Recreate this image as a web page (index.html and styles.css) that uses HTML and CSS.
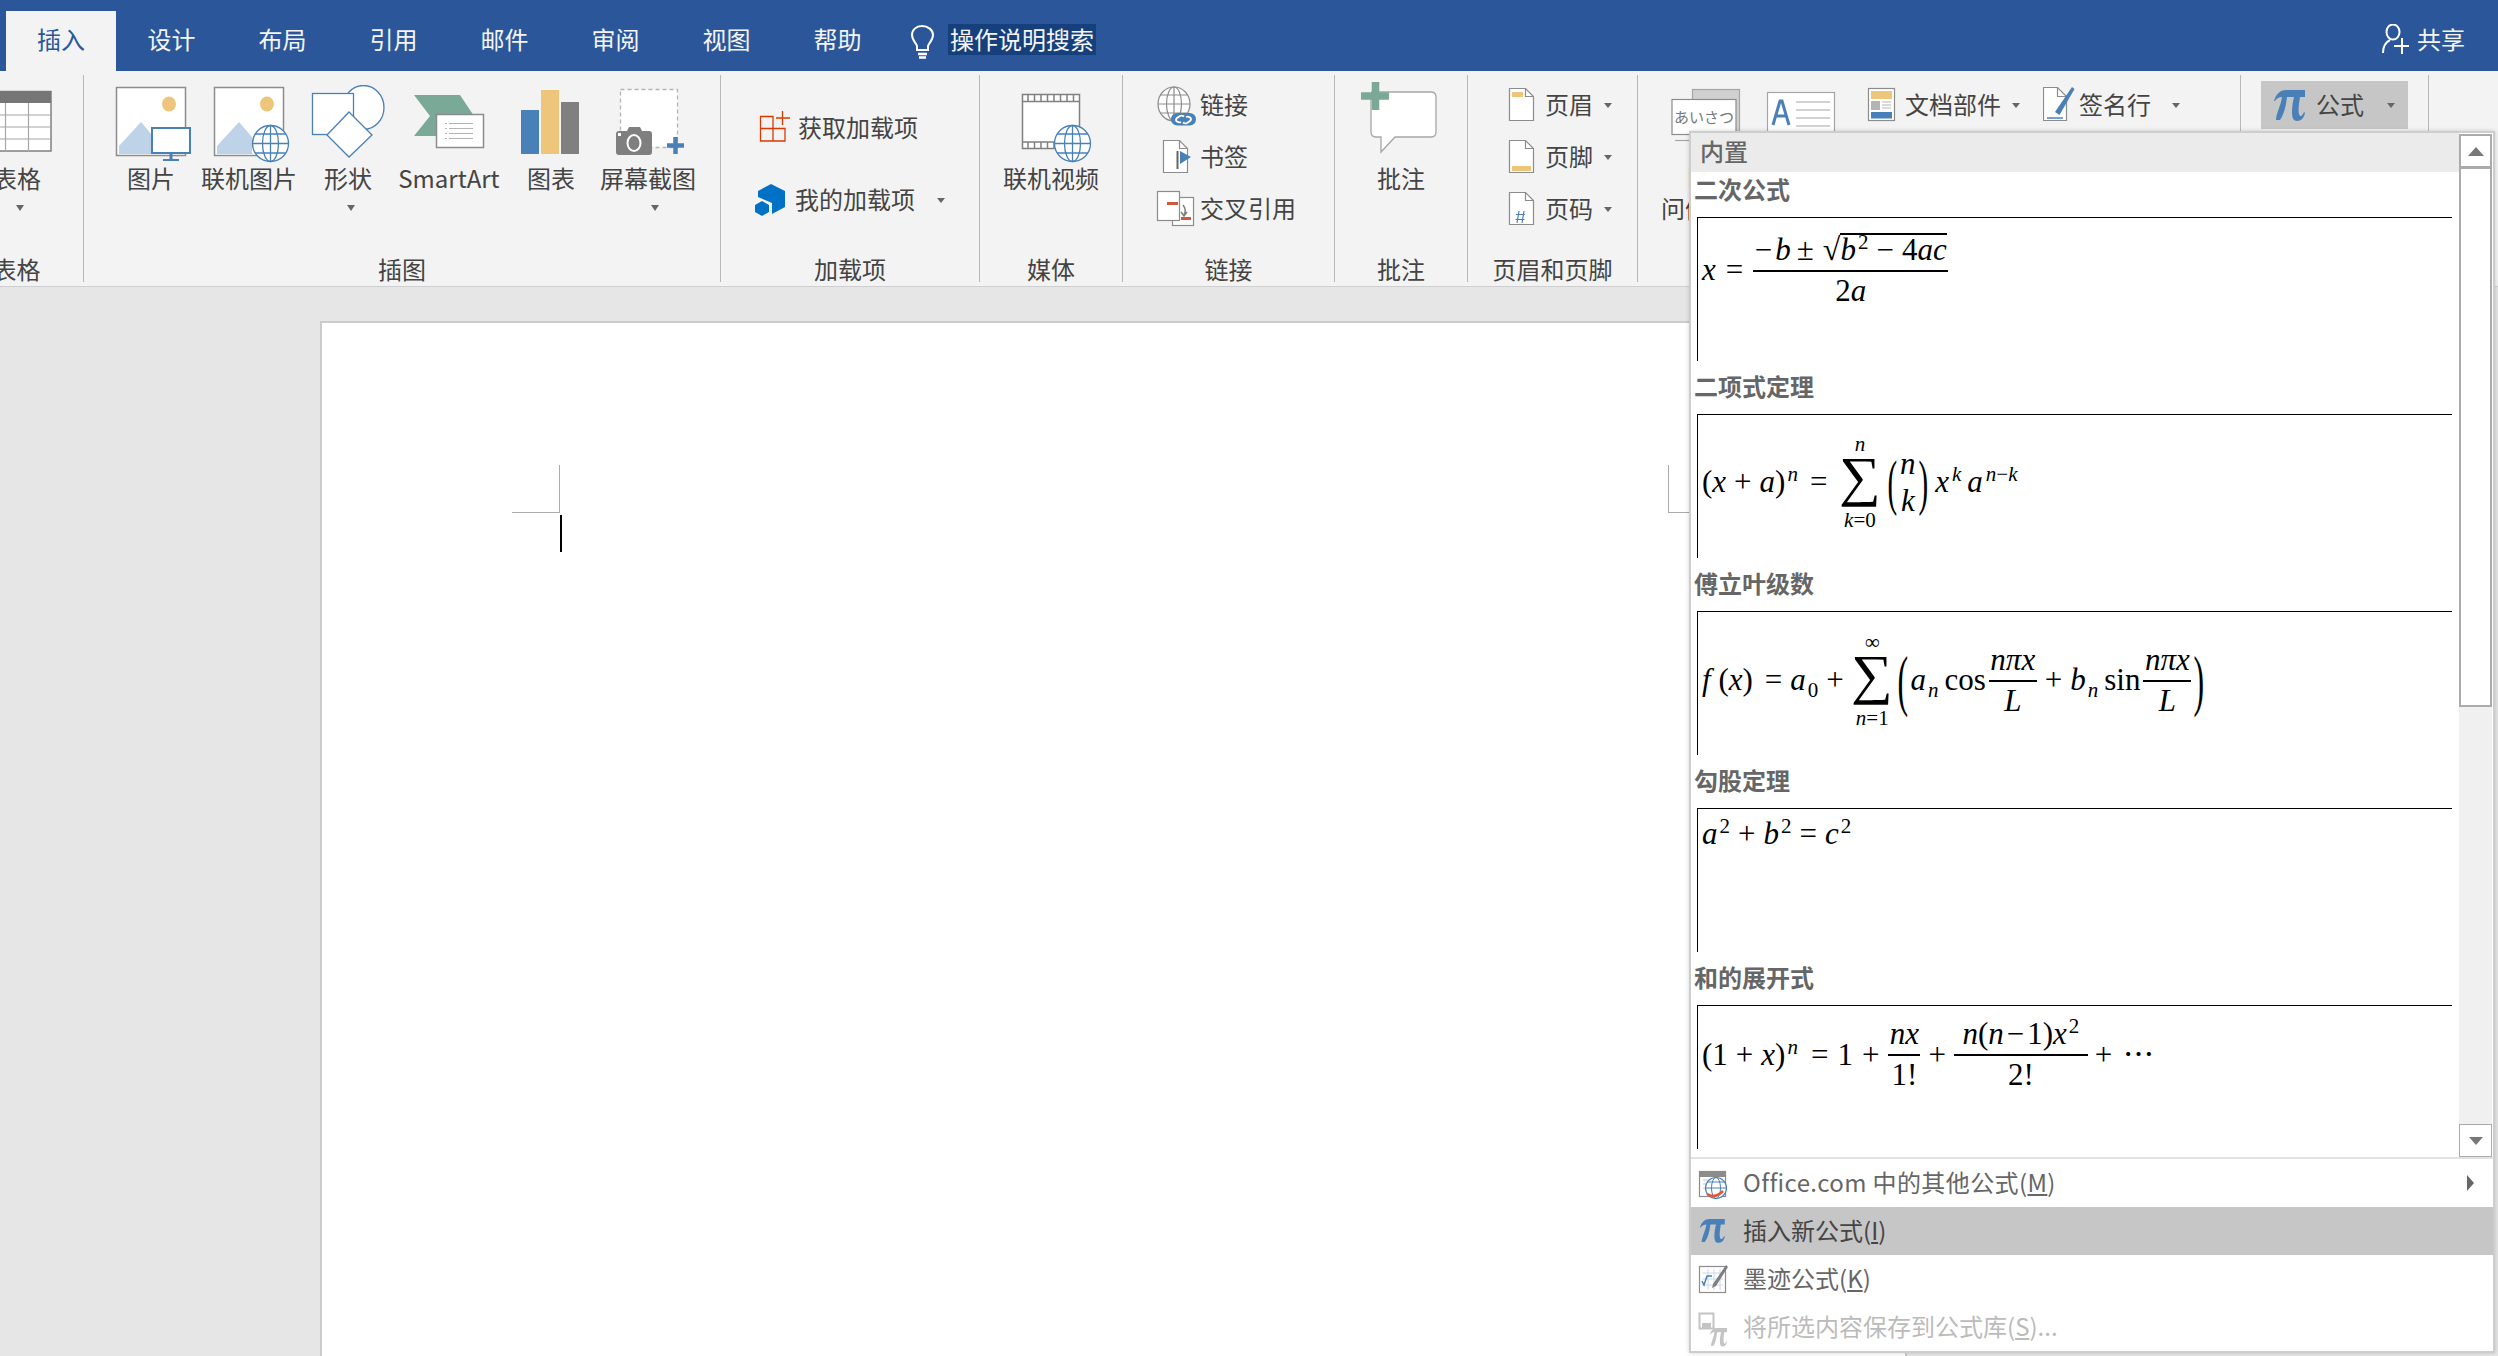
FILE: index.html
```html
<!DOCTYPE html>
<html lang="zh-CN">
<head>
<meta charset="utf-8">
<title>插入 - Word</title>
<link rel="stylesheet" href="styles.css">
</head>
<body>
<div class="app">
  <header class="titlebar">
    <nav class="tabs">
      <span class="tab active">插入</span><span class="tab">设计</span><span class="tab">布局</span><span class="tab">引用</span><span class="tab">邮件</span><span class="tab">审阅</span><span class="tab">视图</span><span class="tab">帮助</span>
    </nav>
    <svg class="bulb" width="23" height="34" viewBox="911 25 23 34"><path d="M917 46c-1-3-5-6-5-11 0-5 4-9 10-9s11 4 11 9c0 5-4 8-5 11v4h-11z" fill="none" stroke="#fff" stroke-width="2"/><path d="M918 54h9M919 57.500h7" stroke="#fff" stroke-width="2.500"/></svg>
    <span class="search">操作说明搜索</span>
    <div class="share">
      <svg width="28" height="30" viewBox="2382 24 28 30"><ellipse cx="2393" cy="32" rx="6.500" ry="7.500" fill="none" stroke="#fff" stroke-width="2"/><path d="M2383 53c0-7 3-11 7-13" fill="none" stroke="#fff" stroke-width="2"/><path d="M2402 38v16M2394 46h15" stroke="#fff" stroke-width="2"/></svg>
      <span>共享</span>
    </div>
  </header>

  <section class="ribbon">
    <div class="group g0">
      <div class="gbody">
        <div class="big w100">
          <svg width="100" height="76" viewBox="-33 85 100 76"><rect x="-20" y="91.500" width="71" height="59.500" fill="#fff" stroke="#808080" stroke-width="1.500"/><rect x="-20" y="91" width="71" height="12" fill="#767676"/><path d="M-20 115h71M-20 127h71M-20 139h71M5.500 103v48M28.500 103v48" stroke="#a6a6a6" stroke-width="1.200"/></svg>
          <span class="blabel">表格</span><i class="caret caret-t"></i>
        </div>
      </div>
      <div class="glabel">表格</div>
    </div>

    <div class="group g1">
      <div class="gbody">
        <div class="big w98">
          <svg width="98" height="76" viewBox="102 85 98 76"><rect x="116.500" y="87.500" width="69" height="68" fill="#fff" stroke="#8c8c8c" stroke-width="1.500"/><ellipse cx="169" cy="104" rx="7" ry="7.500" fill="#edc67b"/><path d="M119 154v-8l22-24 11 13v19z" fill="#bed2e8"/><rect x="152" y="128" width="38" height="25" fill="#fff" stroke="#4a80b8" stroke-width="2"/><path d="M171 153v6M163 160.500h16" stroke="#4a80b8" stroke-width="3"/></svg>
          <span class="blabel">图片</span>
        </div>
        <div class="big w98">
          <svg width="98" height="80" viewBox="200 85 98 80"><rect x="214.500" y="87.500" width="69" height="68" fill="#fff" stroke="#8c8c8c" stroke-width="1.500"/><ellipse cx="267" cy="104" rx="7" ry="7.500" fill="#edc67b"/><path d="M217 154v-8l22-24 13 15v17z" fill="#bed2e8"/><ellipse cx="270.500" cy="143.500" rx="18" ry="18" fill="#fff" stroke="#4a80b8" stroke-width="1.300"/><ellipse cx="270.500" cy="143.500" rx="8" ry="18" fill="none" stroke="#4a80b8" stroke-width="1.300"/><path d="M252.500 143.500h36M270.500 125.500v36M255 134h31M255 153h31" stroke="#4a80b8" stroke-width="1.300"/></svg>
          <span class="blabel shift-up">联机图片</span>
        </div>
        <div class="big w100">
          <svg width="100" height="76" viewBox="298 85 100 76"><ellipse cx="363.500" cy="107.500" rx="20.500" ry="22" fill="#fff" stroke="#4a80b8" stroke-width="1.300"/><rect x="312.500" y="93.500" width="41" height="41" fill="#fff" stroke="#4a80b8" stroke-width="1.300"/><path d="M349 112l23 23-23 22-22-22z" fill="#fff" stroke="#4a80b8" stroke-width="1.300"/></svg>
          <span class="blabel">形状</span><i class="caret caret-s"></i>
        </div>
        <div class="big w102">
          <svg width="102" height="76" viewBox="398 85 102 76"><path d="M414 95h46l16 24-30 17h-32l16-20z" fill="#7aa997"/><rect x="436.500" y="114.500" width="47" height="33" fill="#fff" stroke="#8c8c8c" stroke-width="1.500"/><path d="M445 123.500h2M449 123.500h24M445 128.500h2M449 128.500h24M445 133.500h2M449 133.500h24M445 138.500h2M449 138.500h24" stroke="#b4b4b4" stroke-width="1.200"/></svg>
          <span class="blabel">SmartArt</span>
        </div>
        <div class="big w102">
          <svg width="102" height="76" viewBox="500 85 102 76"><rect x="521" y="110" width="18" height="44" fill="#4a80b8"/><rect x="541" y="90" width="18" height="64" fill="#edc67b"/><rect x="561" y="102" width="18" height="52" fill="#808080"/></svg>
          <span class="blabel">图表</span>
        </div>
        <div class="big w92">
          <svg width="92" height="76" viewBox="602 85 92 76"><rect x="620.500" y="89.500" width="57" height="58" fill="#fff" stroke="#b4b4b4" stroke-width="1.300" stroke-dasharray="4 3"/><path d="M616 134q0-3 3-3h8l2-4h11l2 4h7q3 0 3 3v18q0 3-3 3h-30q-3 0-3-3z" fill="#7f7f7f"/><ellipse cx="634" cy="143" rx="6.500" ry="8" fill="none" stroke="#fff" stroke-width="2"/><rect x="618" y="133" width="3" height="3" fill="#fff"/><path d="M667 145.500h17M675.500 137v17" stroke="#4a80b8" stroke-width="4.500"/></svg>
          <span class="blabel">屏幕截图</span><i class="caret caret-r"></i>
        </div>
      </div>
      <div class="glabel">插图</div>
    </div>

    <div class="group g2">
      <div class="gbody col col-addin">
        <div class="row addin">
          <svg width="44" height="48" viewBox="754 104 44 48"><path d="M760.500 116.500h12.500v12h12v12.500h-24.500zM760.500 128.500h12.500M773 141v-12" fill="none" stroke="#d83b01" stroke-width="1.300"/><path d="M776 118h14M782.500 111v14" stroke="#d83b01" stroke-width="1.300"/></svg>
          <span>获取加载项</span>
        </div>
        <div class="row addin">
          <svg width="41" height="48" viewBox="754 176 41 48"><path d="M758 191l13-7 14 7v16l-13 7v-11l-14-6z" fill="#0072c6"/><path d="M755 205l7-4 7 4v7l-7 4-7-4z" fill="#0072c6"/></svg>
          <span>我的加载项</span><i class="caret caret-inline addin-caret"></i>
        </div>
      </div>
      <div class="glabel">加载项</div>
    </div>

    <div class="group g3">
      <div class="gbody">
        <div class="big w100">
          <svg width="100" height="80" viewBox="1001 85 100 80"><rect x="1022.500" y="94.500" width="57" height="54" fill="#fff" stroke="#808080" stroke-width="1.500"/><path d="M1023 101.500h56M1023 142h56" stroke="#808080" stroke-width="1.500"/><path d="M1028 95v6M1034.500 95v6M1041 95v6M1047.500 95v6M1054 95v6M1060.500 95v6M1067 95v6M1073.500 95v6M1028 142v6M1034.500 142v6M1041 142v6M1047.500 142v6M1054 142v6" stroke="#808080" stroke-width="1.500"/><ellipse cx="1072.500" cy="143.500" rx="18" ry="18" fill="#fff" stroke="#4a80b8" stroke-width="1.300"/><ellipse cx="1072.500" cy="143.500" rx="8" ry="18" fill="none" stroke="#4a80b8" stroke-width="1.300"/><path d="M1054.500 143.500h36M1072.500 125.500v36M1057 134h31M1057 153h31" stroke="#4a80b8" stroke-width="1.300"/></svg>
          <span class="blabel shift-up">联机视频</span>
        </div>
      </div>
      <div class="glabel">媒体</div>
    </div>

    <div class="group g4">
      <div class="gbody col">
        <div class="row">
          <svg width="44" height="52" viewBox="1156 79 44 52"><ellipse cx="1174" cy="104" rx="16" ry="17" fill="#fff" stroke="#8c8c8c" stroke-width="1.200"/><ellipse cx="1174" cy="104" rx="7.500" ry="17" fill="none" stroke="#8c8c8c" stroke-width="1.200"/><path d="M1158 104h32M1174 87v34M1160.500 95h27M1160.500 113h27" stroke="#8c8c8c" stroke-width="1.200"/><rect x="1171" y="113" width="25" height="12.500" rx="6.200" fill="#4a80b8"/><path d="M1184 116.500q-2-1.500-4-.5l-3 2q-2 2 0 3.500t4 .5M1183 122.500q2 1.500 4 .5l3-2q2-2 0-3.500t-4-.5" fill="none" stroke="#fff" stroke-width="1.800"/></svg>
          <span>链接</span>
        </div>
        <div class="row">
          <svg width="44" height="52" viewBox="1156 131 44 52"><path d="M1163.500 140.500h16l8 8v24h-24z" fill="#fff" stroke="#8c8c8c" stroke-width="1.200"/><path d="M1179.500 140.500v8h8" fill="none" stroke="#8c8c8c" stroke-width="1.200"/><rect x="1176.500" y="151" width="2" height="18" fill="#666"/><path d="M1180 151l11 6-11 7z" fill="#4a80b8"/></svg>
          <span>书签</span>
        </div>
        <div class="row">
          <svg width="44" height="52" viewBox="1156 183 44 52"><rect x="1172.500" y="197.500" width="21" height="28" fill="#fff" stroke="#8c8c8c" stroke-width="1.200"/><rect x="1157.500" y="191.500" width="22" height="29" fill="#fff" stroke="#8c8c8c" stroke-width="1.200"/><rect x="1167" y="202" width="11" height="3" fill="#d2583d"/><rect x="1181" y="217" width="10" height="3" fill="#d2583d"/><path d="M1183 205q4 5 1 10M1181 212l3 4 3-4" fill="none" stroke="#808080" stroke-width="1.500"/></svg>
          <span>交叉引用</span>
        </div>
      </div>
      <div class="glabel">链接</div>
    </div>

    <div class="group g5">
      <div class="gbody">
        <div class="big w100">
          <svg width="100" height="80" viewBox="1351 81 100 80" class="comment-icon"><path d="M1371 92h60q5 0 5 5v35q0 5-5 5h-36l-14 15v-15h-5q-5 0-5-5v-35q0-5 5-5z" fill="#fff" stroke="#a6a6a6" stroke-width="1.300"/><path d="M1361 96h28M1375.500 82v28" stroke="#7aa997" stroke-width="7.500"/></svg>
          <span class="blabel">批注</span>
        </div>
      </div>
      <div class="glabel">批注</div>
    </div>

    <div class="group g6">
      <div class="gbody col">
        <div class="row">
          <svg width="37" height="52" viewBox="1508 79 37 52"><path d="M1509.500 88.500h16l8 8v24h-24z" fill="#fff" stroke="#8c8c8c" stroke-width="1.200"/><path d="M1525.500 88.500v8h8" fill="none" stroke="#8c8c8c" stroke-width="1.200"/><rect x="1512" y="92" width="11" height="5" fill="#edc67b"/></svg>
          <span>页眉</span><i class="caret caret-inline"></i>
        </div>
        <div class="row">
          <svg width="37" height="52" viewBox="1508 131 37 52"><path d="M1509.500 140.500h16l8 8v24h-24z" fill="#fff" stroke="#8c8c8c" stroke-width="1.200"/><path d="M1525.500 140.500v8h8" fill="none" stroke="#8c8c8c" stroke-width="1.200"/><rect x="1512" y="166" width="19" height="5" fill="#edc67b"/></svg>
          <span>页脚</span><i class="caret caret-inline"></i>
        </div>
        <div class="row">
          <svg width="37" height="52" viewBox="1508 183 37 52"><path d="M1509.500 192.500h16l8 8v24h-24z" fill="#fff" stroke="#8c8c8c" stroke-width="1.200"/><path d="M1525.500 192.500v8h8" fill="none" stroke="#8c8c8c" stroke-width="1.200"/><path d="M1519 211l-2 12M1524 211l-2 12M1516 214.500h9M1515.500 219.500h9" stroke="#4a80b8" stroke-width="1.200"/></svg>
          <span>页码</span><i class="caret caret-inline"></i>
        </div>
      </div>
      <div class="glabel">页眉和页脚</div>
    </div>

    <div class="group g7">
      <div class="gbody g7body">
        <div class="big w100 greet">
          <svg width="100" height="60" viewBox="1647 81 100 60"><rect x="1692.500" y="87.500" width="47" height="42" fill="#d0d0d0" stroke="#a6a6a6" stroke-width="1.200"/><rect x="1672" y="97.500" width="64" height="35" fill="#fff" stroke="#8c8c8c" stroke-width="1.200"/><text x="1674" y="121" class="greet-text">あいさつ</text><path d="M1675 138.500h16" stroke="#a6a6a6" stroke-width="1.200"/></svg>
          <span class="blabel greet-a">日</span>
          <span class="blabel greet-b">问候语</span>
        </div>
        <svg class="textbox" width="70" height="52" viewBox="1766 81 70 52"><rect x="1767.500" y="92.500" width="67" height="50" fill="#fff" stroke="#a6a6a6" stroke-width="1.200"/><path d="M1773 125l7-24h2l7 24M1775.500 116h11" fill="none" stroke="#4a80b8" stroke-width="3"/><path d="M1796 102h34M1796 110h34M1796 118h34M1796 126h34" stroke="#c4c4c4" stroke-width="1.300"/></svg>
        <div class="row part">
          <svg width="41" height="52" viewBox="1864 79 41 52"><rect x="1868.500" y="88.500" width="26" height="32" fill="#fff" stroke="#8c8c8c" stroke-width="1.200"/><rect x="1871" y="91" width="21" height="8" fill="#edc67b"/><rect x="1871" y="101" width="9" height="9" fill="#b4b4b4"/><path d="M1882 102h9M1882 105h9M1882 108h9" stroke="#b4b4b4"/><rect x="1871" y="112" width="21" height="6.500" fill="#4a80b8"/></svg>
          <span>文档部件</span><i class="caret caret-inline"></i>
        </div>
        <div class="row part sign">
          <svg width="36" height="52" viewBox="2044 79 36 52"><path d="M2044.500 87.500h14l9 9v24h-23z" fill="#fff" stroke="#8c8c8c" stroke-width="1.200"/><path d="M2058.500 87.500v9h9" fill="none" stroke="#8c8c8c" stroke-width="1.200"/><path d="M2056 112l17-25 2.500 2-15 26z" fill="#4a80b8"/><path d="M2048 118h16" stroke="#4a80b8" stroke-width="1.500"/></svg>
          <span>签名行</span><i class="caret caret-inline sign-caret"></i>
        </div>
      </div>
      <div class="glabel"></div>
    </div>

    <div class="group g8">
      <div class="gbody">
        <div class="eqbtn">
          <svg width="55" height="48" viewBox="2261 81 55 48"><path class="pi" d="M2274 101C2276 94 2280 90 2286 90H2305V97H2300C2299 104 2298 110 2299 114 2300 117 2302 117 2304 112L2305 113C2304 118 2301 121 2297 121 2293 121 2292 117 2292 112 2292 106 2293 101 2294 97H2287C2286 106 2284 114 2280 120H2276C2276 114 2281 105 2282 97 2279 97 2277 98 2275 101Z"/></svg>
          <span>公式</span><i class="caret caret-inline eq-caret"></i>
        </div>
      </div>
      <div class="glabel"></div>
    </div>
  </section>

  <main class="workspace">
    <div class="page">
      <i class="crop crop-l"></i>
      <i class="crop crop-r"></i>
      <i class="cursor"></i>
    </div>
  </main>

  <aside class="popup">
    <div class="gallery">
      <div class="gcontent">
        <div class="ghead">内置</div>

        <h3 class="sec">二次公式</h3>
        <div class="eqbox">
          <div class="eq eq1">
            <i>x</i><span class="op">=</span>
            <span class="frac f-quad"><span class="num"><span class="un">−</span><i>b</i><span class="op pm">±</span><span class="rt">√</span><span class="rad"><i>b</i><sup>2</sup><span class="op">−</span>4<i>ac</i></span></span><span class="den">2<i>a</i></span></span>
          </div>
        </div>

        <h3 class="sec">二项式定理</h3>
        <div class="eqbox">
          <div class="eq eq2">
            <span class="lead">(<i>x</i><span class="op">+</span><i>a</i>)<sup><i>n</i></sup></span><span class="op">=</span>
            <span class="sum"><small><i>n</i></small><b>∑</b><small><i>k</i>=0</small></span>
            <span class="pl">(</span><span class="binom"><i>n</i><i>k</i></span><span class="pl">)</span>
            <span class="tail"><i>x</i><sup><i>k</i></sup><i class="a">a</i><sup><i>n</i>−<i>k</i></sup></span>
          </div>
        </div>

        <h3 class="sec">傅立叶级数</h3>
        <div class="eqbox">
          <div class="eq eq3">
            <span class="lead"><i>f</i> (<i>x</i>)</span><span class="op">=</span><span><i>a</i><sub>0</sub></span><span class="op">+</span>
            <span class="sum"><small>∞</small><b>∑</b><small><i>n</i>=1</small></span>
            <span class="pl pl-big">(</span><span><i>a</i><sub><i>n</i></sub></span><span class="fn">cos</span>
            <span class="frac f-small"><span class="num"><i>nπx</i></span><span class="den"><i>L</i></span></span>
            <span class="op">+</span><span><i>b</i><sub><i>n</i></sub></span><span class="fn">sin</span>
            <span class="frac f-small"><span class="num"><i>nπx</i></span><span class="den"><i>L</i></span></span>
            <span class="pl pl-big">)</span>
          </div>
        </div>

        <h3 class="sec">勾股定理</h3>
        <div class="eqbox">
          <div class="eq eq4">
            <span><i>a</i><sup>2</sup></span><span class="op">+</span><span><i>b</i><sup>2</sup></span><span class="op">=</span><span><i>c</i><sup>2</sup></span>
          </div>
        </div>

        <h3 class="sec">和的展开式</h3>
        <div class="eqbox">
          <div class="eq eq5">
            <span class="lead">(1<span class="op">+</span><i>x</i>)<sup><i>n</i></sup></span><span class="op">=</span><span>1</span><span class="op">+</span>
            <span class="frac f-nx"><span class="num"><i>nx</i></span><span class="den">1!</span></span>
            <span class="op op-t">+</span>
            <span class="frac f-n2"><span class="num"><i>n</i>(<i>n</i><span class="op">−</span>1)<i>x</i><sup>2</sup></span><span class="den">2!</span></span>
            <span class="op op-last">+</span><span>⋯</span>
          </div>
        </div>
      </div>
      <div class="scroll">
        <div class="sbtn"><i class="tri-up"></i></div>
        <div class="thumb"></div>
        <div class="track"></div>
        <div class="sbtn sbtn-down"><i class="tri-down"></i></div>
      </div>
    </div>

    <div class="menu">
      <div class="mitem">
        <svg width="52" height="48" viewBox="1691 0 52 48"><rect x="1699.500" y="12.500" width="26" height="25" fill="#fff" stroke="#8c8c8c" stroke-width="1.200"/><rect x="1700" y="13" width="25" height="5" fill="#8c8c8c"/><path d="M1703 21h8M1703 25h8M1703 29h8" stroke="#c4c4c4"/><circle cx="1716" cy="29" r="10.500" fill="#fff" stroke="#4a80b8" stroke-width="1.200"/><ellipse cx="1716" cy="29" rx="4.500" ry="10.500" fill="none" stroke="#4a80b8"/><path d="M1705.500 29h21M1707 23h18" stroke="#4a80b8"/><path d="M1707 35q8 5 16-3" fill="none" stroke="#e8562a" stroke-width="2.500"/></svg>
        <span class="wide">Office.com 中的其他公式(<u>M</u>)</span>
        <i class="tri-right"></i>
      </div>
      <div class="mitem hl">
        <svg width="52" height="48" viewBox="1691 0 52 48"><path class="pi" transform="translate(1700 12) scale(.8 .77) translate(-2274 -90)" d="M2274 101C2276 94 2280 90 2286 90H2305V97H2300C2299 104 2298 110 2299 114 2300 117 2302 117 2304 112L2305 113C2304 118 2301 121 2297 121 2293 121 2292 117 2292 112 2292 106 2293 101 2294 97H2287C2286 106 2284 114 2280 120H2276C2276 114 2281 105 2282 97 2279 97 2277 98 2275 101Z"/></svg>
        <span>插入新公式(<u>I</u>)</span>
      </div>
      <div class="mitem">
        <svg width="52" height="48" viewBox="1691 0 52 48"><rect x="1699.500" y="11.500" width="26" height="26" fill="#fff" stroke="#8c8c8c" stroke-width="1.200"/><path d="M1702 18h21M1702 24h21M1702 30h21M1708 14v21M1714 14v21M1720 14v21" stroke="#c9d8ea"/><path d="M1702 26l2 4 3-9h5" fill="none" stroke="#4a80b8" stroke-width="1.500"/><path d="M1713 29l13-19 2 2-12 19-4 2z" fill="#7f7f7f"/></svg>
        <span>墨迹公式(<u>K</u>)</span>
      </div>
      <div class="mitem off">
        <svg width="52" height="48" viewBox="1691 0 52 48"><rect x="1699.500" y="10.500" width="14" height="15" fill="#fff" stroke="#c4c4c4" stroke-width="2"/><rect x="1702" y="20" width="9" height="5" fill="#c4c4c4"/><path class="pi-off" transform="translate(1710 25) scale(.55 .6) translate(-2274 -90)" d="M2274 101C2276 94 2280 90 2286 90H2305V97H2300C2299 104 2298 110 2299 114 2300 117 2302 117 2304 112L2305 113C2304 118 2301 121 2297 121 2293 121 2292 117 2292 112 2292 106 2293 101 2294 97H2287C2286 106 2284 114 2280 120H2276C2276 114 2281 105 2282 97 2279 97 2277 98 2275 101Z"/></svg>
        <span>将所选内容保存到公式库(<u>S</u>)...</span>
      </div>
    </div>
  </aside>
</div>
</body>
</html>
```
FILE: styles.css
```css
* { box-sizing: border-box; }
html, body { margin: 0; height: 100%; overflow: hidden; }
body { font-family: "Noto Sans CJK SC", "Liberation Sans", sans-serif; font-size: 24px; color: #444; background: #e6e6e6; }
svg { display: block; flex: none; }
.app { position: relative; width: 2498px; height: 1356px; display: flex; flex-direction: column; overflow: hidden; }

/* title bar */
.titlebar { height: 71px; flex: none; background: #2b579a; color: #f4f4f4; display: flex; align-items: flex-end; padding-left: 5px; position: relative; }
.tabs { display: flex; height: 60px; }
.tab { width: 111px; height: 60px; line-height: 56px; text-align: center; }
.tab.active { background: #f3f3f3; color: #2b579a; margin-left: 1px; width: 110px; }
.bulb { margin: 0 14px 12px 18px; }
.search { background: #16407c; height: 31px; line-height: 29px; padding: 0 2px; margin-bottom: 16px; }
.share { margin-left: auto; display: flex; align-items: center; gap: 7px; padding-right: 33px; height: 30px; margin-bottom: 17px; }
.share span { margin-bottom: 2px; }

/* ribbon */
.ribbon { height: 216px; flex: none; background: #f3f3f3; border-bottom: 1px solid #cfcfcf; display: flex; padding-top: 4px; }
.group { height: 207px; border-right: 1px solid #b8b8b8; display: flex; flex-direction: column; flex: none; }
.gbody { flex: 1; display: flex; min-height: 0; }
.glabel { height: 24px; line-height: 21px; text-align: center; white-space: nowrap; }
.g0 { width: 134px; margin-left: -50px; }
.g0 .gbody { padding-left: 17px; }
.g1 { width: 637px; }
.g1 .gbody { padding-left: 18px; }
.g2 { width: 259px; }
.g2 .gbody { padding-left: 33px; }
.g3 { width: 143px; }
.g3 .gbody { padding-left: 21px; }
.g4 { width: 212px; }
.g4 .gbody { padding-left: 33px; }
.g5 { width: 133px; }
.g5 .gbody { padding-left: 16px; }
.g6 { width: 170px; }
.g6 .gbody { padding-left: 40px; }
.g7 { width: 603px; }
.g7 .gbody { padding-left: 9px; }
.g8 { width: 188px; }
.g8 .gbody { padding-left: 20px; }

.big { display: flex; flex-direction: column; align-items: center; padding-top: 10px; flex: none; position: relative; }
.comment-icon { margin-top: -4px; }
.w92 { width: 92px; }
.w98 { width: 98px; }
.w100 { width: 100px; }
.w102 { width: 102px; }
.blabel { height: 34px; line-height: 34px; white-space: nowrap; }
.shift-up { margin-top: -4px; }
.caret { display: block; width: 0; height: 0; border-left: 4.500px solid transparent; border-right: 4.500px solid transparent; border-top: 6px solid #666; margin-top: 10px; flex: none; }
.caret-t { margin-left: 6px; }
.caret-s { margin-left: 6px; }
.caret-r { margin-left: 13px; }
.caret-inline { margin-top: 0; margin-left: 11px; border-left-width: 4px; border-right-width: 4px; border-top-width: 5px; }
.addin-caret { margin-left: 22px; }
.sign-caret { margin-left: 21px; }
.eq-caret { margin-left: 23px; }
.col { flex-direction: column; padding-top: 4px; }
.row { display: flex; align-items: center; height: 52px; white-space: nowrap; flex: none; }
.row > span, .eqbtn > span { margin-bottom: 3px; }
.col-addin { padding-top: 29px; gap: 24px; }
.addin { height: 48px; }
.g7body { align-items: flex-start; padding-top: 4px; }
.greet { padding-top: 2px; margin-top: 2px; }
.greet-a { line-height: 34px; margin-top: 16px; height: 30px; }
.greet-b { line-height: 34px; height: 34px; margin-top: 2px; }
.greet-text { font-size: 15px; fill: #777; font-family: "Noto Sans CJK JP", sans-serif; }
.textbox { margin-left: 19px; margin-top: 2px; }
.part { margin-left: 28px; }
.sign { margin-left: 23px; }
.eqbtn { display: flex; align-items: center; width: 147px; height: 48px; background: #c6c6c6; margin-top: 6px; }
.pi { fill: #4a80b8; }
.pi-off { fill: #c4c4c4; }

/* document area */
.workspace { flex: 1; padding: 34px 0 0 320px; background: #e6e6e6; min-height: 0; overflow: hidden; }
.page { width: 1587px; height: 1200px; background: #fff; border: 2px solid #cbcbcb; border-width: 2px 2px 0 2px; position: relative; }
.crop { position: absolute; width: 48px; height: 48px; border-bottom: 1.500px solid #ababab; }
.crop-l { left: 190px; top: 142px; border-right: 1.500px solid #ababab; }
.crop-r { left: 1346px; top: 142px; border-left: 1.500px solid #ababab; }
.cursor { position: absolute; left: 238px; top: 192px; width: 2px; height: 37px; background: #000; }

/* popup */
.popup { position: absolute; left: 1689px; top: 131px; width: 806px; height: 1222px; background: #fff; border: 2px solid #cdcdcd; box-shadow: 0 0 4px rgba(0,0,0,.18); display: flex; flex-direction: column; z-index: 5; }
.gallery { height: 1024px; flex: none; display: flex; }
.gcontent { width: 768px; flex: none; overflow: hidden; }
.ghead { height: 39px; line-height: 36px; background: #ebebeb; padding-left: 9px; color: #666; font-weight: 500; }
.sec { margin: 0; height: 45px; line-height: 33px; font-size: 24px; font-weight: 700; color: #666; padding-left: 3px; }
.eqbox { height: 144px; margin: 0 7px 8px 6px; border-top: 1px solid #000; border-left: 1px solid #000; padding-left: 4px; overflow: hidden; }

.eq { display: flex; align-items: center; font-family: "Liberation Serif", serif; font-size: 31px; color: #000; white-space: nowrap; line-height: 34px; }
.eq i { font-style: italic; }
.eq sup, .eq sub { font-size: 21px; line-height: 0; margin-left: 2px; }
.eq sup { vertical-align: 11px; }
.eq sub { vertical-align: -7px; }
.op { margin: 0 8px; }
.un { margin-right: 3px; }
.lead { margin-right: 4px; }
.eq1 { margin-top: 14px; }
.eq1 > .op { margin: 0 10px; }
.eq2 { margin-top: 17px; }
.eq3 { margin-top: 18px; }
.eq4 { margin-top: 8px; }
.eq5 { margin-top: 11px; }
.frac { display: inline-flex; flex-direction: column; align-items: center; }
.num { display: block; padding: 0 1px 3px; border-bottom: 2px solid #000; width: 100%; text-align: center; }
.den { display: block; padding-top: 2px; }
.f-quad { width: 195px; }
.f-small { width: 48px; margin: 0; }
.f-nx { width: 32px; }
.f-n2 { width: 134px; }
.eq5 > .op { margin: 0 9px; }
.eq5 > .op-t { margin: 0 8px; }
.eq5 > .op-last { margin: 0 11px 0 7px; }
.f-n2 .op { margin: 0 3px; }
.f-quad .rad .op { margin: 0 8px; }
.rt { font-size: 32px; margin-left: 3px; }
.rad { border-top: 2px solid #000; line-height: 30px; display: inline-block; }
.f-quad .pm { margin: 0 6px; }
.sum { display: inline-flex; flex-direction: column; align-items: center; width: 37px; margin: 0 8px 0 6px; line-height: 1; }
.eq3 .sum { margin-right: 4px; margin-left: 2px; }
.sum small { font-size: 21px; line-height: 24px; }
.sum b { font-weight: 400; font-size: 50px; line-height: 52px; height: 52px; display: block; transform: translateY(-6px) scale(1.17, 1.1); }
.pl { display: inline-block; font-size: 29px; transform: scale(1, 2.1); margin: 0 1px; }
.pl-big { transform: scale(1.1, 2.3); margin: 0 3px; }
.binom { display: inline-flex; flex-direction: column; align-items: center; line-height: 37px; margin: 0 2px; }
.tail { margin-left: 6px; }
.tail sup { margin-left: 3px; }
.tail .a { margin-left: 6px; }
.fn { margin: 0 3px 0 6px; }

/* scroll bar */
.scroll { width: 33px; flex: none; margin-top: 1px; display: flex; flex-direction: column; background: #f0f0f0; }
.sbtn { height: 34px; flex: none; background: #fff; border: 2px solid #ababab; display: flex; align-items: center; justify-content: center; }
.sbtn-down { height: 33px; border-width: 1px; }
.thumb { height: 539px; flex: none; background: #fff; border: 2px solid #ababab; border-top-width: 1px; }
.track { flex: 1; }
.tri-up { width: 0; height: 0; border-left: 8px solid transparent; border-right: 8px solid transparent; border-bottom: 9px solid #777; }
.tri-down { width: 0; height: 0; border-left: 7px solid transparent; border-right: 7px solid transparent; border-top: 8px solid #777; }

/* menu */
.menu { border-top: 2px solid #e2e2e2; flex: none; }
.mitem { height: 48px; display: flex; align-items: center; color: #666; white-space: nowrap; position: relative; }
.mitem > span { margin-bottom: 3px; }
.mitem .wide { letter-spacing: .4px; }
.mitem.hl { background: #c6c6c6; color: #444; }
.mitem.off { color: #bbb; }
.mitem u { text-decoration: underline; text-underline-offset: 2px; }
.tri-right { margin-left: auto; margin-right: 19px; width: 0; height: 0; border-top: 8px solid transparent; border-bottom: 8px solid transparent; border-left: 7px solid #666; }
```
